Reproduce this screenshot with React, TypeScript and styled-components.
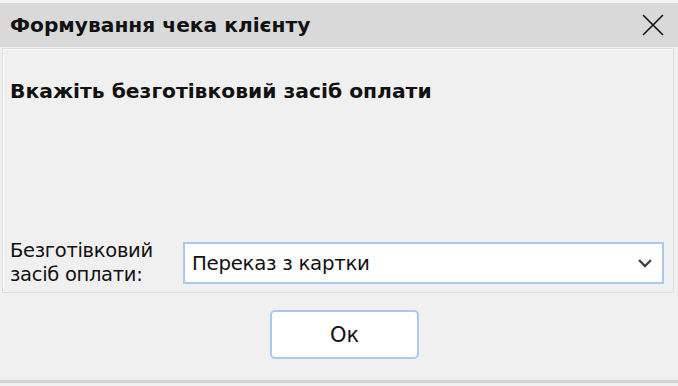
import React from "react";
import styled, { createGlobalStyle } from "styled-components";

const Global = createGlobalStyle`
  html, body { margin: 0; padding: 0; background: #f0f0f0; }
  body { width: 678px; height: 386px; overflow: hidden; font-family: "DejaVu Sans", "Liberation Sans", sans-serif; }
  #root { width: 678px; height: 386px; }
`;

const Window = styled.div`
  width: 678px;
  height: 386px;
  display: flex;
  flex-direction: column;
  background: #f0f0f0;
  box-sizing: border-box;
  border-top: 3px solid #f3f3f3;
  box-shadow: inset 0 2px 0 #cfcfcf;
`;

const TitleBar = styled.div`
  height: 44px;
  background: #d9d9d9;
  display: flex;
  align-items: center;
  justify-content: space-between;
  padding: 0 12px 0 10px;
`;

const Title = styled.div`
  font-family: "DejaVu Sans", sans-serif;
  font-weight: bold;
  font-size: 20.2px;
  color: #111;
`;

const Close = styled.button`
  border: none;
  background: transparent;
  padding: 0;
  width: 26px;
  height: 26px;
  display: flex;
  align-items: center;
  justify-content: center;
`;

const Panel = styled.div`
  margin: 1px 4px 0 2px;
  height: 245px;
  border: 1px solid #dedede;
  box-shadow: inset 1px 1px 0 #fafafa;
  display: flex;
  flex-direction: column;
  justify-content: space-between;
  padding: 30px 9px 5px 7px;
  box-sizing: border-box;
`;

const Heading = styled.div`
  font-family: "DejaVu Sans", sans-serif;
  font-weight: bold;
  font-size: 20.3px;
  color: #111;
`;

const Row = styled.div`
  display: flex;
  align-items: center;
  gap: 10px;
`;

const Label = styled.div`
  font-family: "DejaVu Sans", sans-serif;
  font-size: 19.5px;
  line-height: 24px;
  color: #111;
  width: 163px;
  letter-spacing: -0.3px;
  white-space: nowrap;
`;

const Select = styled.div`
  flex: 1;
  height: 42px;
  box-sizing: border-box;
  background: #fff;
  border: 2px solid #a9c9f2;
  display: flex;
  align-items: center;
  justify-content: space-between;
  padding: 0 9px 0 7px;
`;

const SelectText = styled.span`
  font-family: "DejaVu Sans", sans-serif;
  font-size: 19.8px;
  color: #111;
  letter-spacing: -0.3px;
`;

const Footer = styled.div`
  flex: 1;
  display: flex;
  justify-content: center;
  padding: 17px 0 0 11px;
  box-sizing: border-box;
  border-bottom: 3px solid #d2d2d2;
  margin-bottom: 3px;
`;

const OkButton = styled.button`
  width: 149px;
  height: 49px;
  background: #fff;
  border: 2px solid #a9c9f2;
  border-radius: 5px;
  font-family: "DejaVu Sans", sans-serif;
  font-size: 21px;
  color: #111;
  padding: 0;
`;

export default function App() {
  return (
    <>
      <Global />
      <Window>
        <TitleBar>
          <Title>Формування чека клієнту</Title>
          <Close aria-label="close">
            <svg width="24" height="24" viewBox="0 0 24 24">
              <path d="M2 2 L22 22 M22 2 L2 22" stroke="#111" strokeWidth="1.6" />
            </svg>
          </Close>
        </TitleBar>
        <Panel>
          <Heading>Вкажіть безготівковий засіб оплати</Heading>
          <Row>
            <Label>
              Безготівковий
              <br />
              засіб оплати:
            </Label>
            <Select>
              <SelectText>Переказ з картки</SelectText>
              <svg width="16" height="10" viewBox="0 0 16 10">
                <path d="M2 2 L8 8 L14 2" stroke="#444" strokeWidth="2.4" fill="none" />
              </svg>
            </Select>
          </Row>
        </Panel>
        <Footer>
          <OkButton>Ок</OkButton>
        </Footer>
      </Window>
    </>
  );
}
